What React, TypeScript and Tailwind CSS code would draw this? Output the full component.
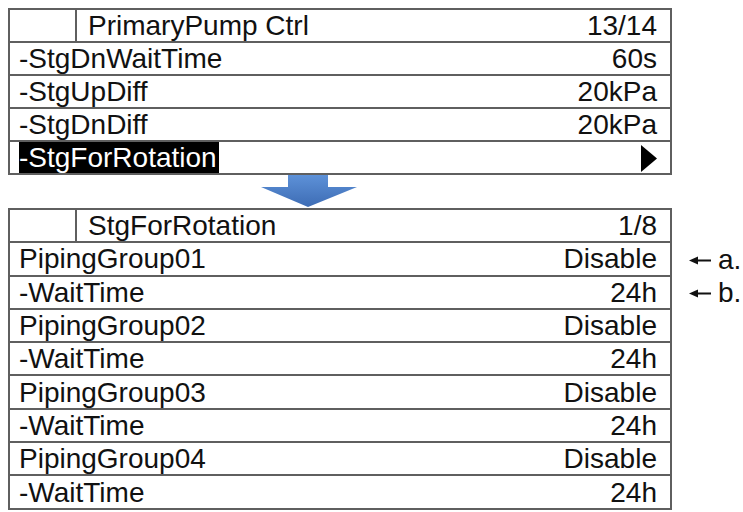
import React from "react";

type Row = { label: string; value?: string; selected?: boolean; more?: boolean };

const pumpRows: Row[] = [
  { label: "-StgDnWaitTime", value: "60s" },
  { label: "-StgUpDiff", value: "20kPa" },
  { label: "-StgDnDiff", value: "20kPa" },
  { label: "-StgForRotation", selected: true, more: true },
];

const rotationRows: Row[] = [
  { label: "PipingGroup01", value: "Disable" },
  { label: "-WaitTime", value: "24h" },
  { label: "PipingGroup02", value: "Disable" },
  { label: "-WaitTime", value: "24h" },
  { label: "PipingGroup03", value: "Disable" },
  { label: "-WaitTime", value: "24h" },
  { label: "PipingGroup04", value: "Disable" },
  { label: "-WaitTime", value: "24h" },
];

function Header({ title, page, rowH }: { title: string; page: string; rowH: string }) {
  return (
    <div className={`flex ${rowH}`}>
      <div className="w-[67px] border-r-2 border-[#5f5f5f]" />
      <div className="flex flex-1 items-center justify-between pl-[11px] pr-[13px] pt-[1px]">
        <span>{title}</span>
        <span>{page}</span>
      </div>
    </div>
  );
}

function MenuRow({ row, rowH }: { row: Row; rowH: string }) {
  return (
    <div className={`flex items-stretch justify-between border-t-2 border-[#5f5f5f] pr-[13px] ${rowH}`}>
      {row.selected ? (
        <span className="ml-[9px] flex items-center bg-black pr-[2px] pt-[1px] text-white">{row.label}</span>
      ) : (
        <span className="flex items-center pl-[9px] pt-[1px]">{row.label}</span>
      )}
      {row.more ? (
        <span className="flex items-end pb-[1px]">
          <svg width="16" height="27" viewBox="0 0 16 27">
            <polygon points="0,0 16,13.5 0,27" fill="#000" />
          </svg>
        </span>
      ) : (
        <span className="flex items-center pt-[1px]">{row.value}</span>
      )}
    </div>
  );
}

function DownArrow() {
  return (
    <div className="h-[33px] pl-[252px]">
      <svg width="98" height="33" viewBox="0 0 98 33">
        <defs>
          <linearGradient id="arrowFill" x1="0" y1="0" x2="0" y2="1">
            <stop offset="0" stopColor="#5d91d8" />
            <stop offset="1" stopColor="#3d6cb4" />
          </linearGradient>
        </defs>
        <polygon points="28,0 68,0 68,12 97,12 48,32 1,12 28,12" fill="url(#arrowFill)" />
      </svg>
    </div>
  );
}

function Note({ mark }: { mark: string }) {
  return (
    <div className="flex h-[33.3px] items-center pl-[17px]">
      <svg width="22" height="9" viewBox="0 0 22 9" className="mt-[2px]">
        <polygon points="0,4.5 9,0.5 9,8.5" fill="#111" />
        <rect x="8" y="3.5" width="14" height="2" fill="#111" />
      </svg>
      <span className="ml-[7px] pt-[1px]">{mark}</span>
    </div>
  );
}

export default function App() {
  return (
    <div
      className="h-[512px] w-[743px] overflow-hidden bg-white pl-[8px] pt-[8px] text-[28px] leading-none text-[#111]"
      style={{ fontFamily: '"Liberation Sans", Arial, sans-serif' }}
    >
      <div className="w-[664px] border-2 border-[#5f5f5f]">
        <Header title="PrimaryPump Ctrl" page="13/14" rowH="h-[31px]" />
        {pumpRows.map((r, i) => (
          <MenuRow key={i} row={r} rowH="h-[33px]" />
        ))}
      </div>

      <DownArrow />

      <div className="flex">
        <div className="w-[664px] border-2 border-[#5f5f5f]">
          <Header title="StgForRotation" page="1/8" rowH="h-[31.3px]" />
          {rotationRows.map((r, i) => (
            <MenuRow key={i} row={r} rowH="h-[33.3px]" />
          ))}
        </div>
        <div className="pt-[35px]">
          <Note mark="a." />
          <Note mark="b." />
        </div>
      </div>
    </div>
  );
}
